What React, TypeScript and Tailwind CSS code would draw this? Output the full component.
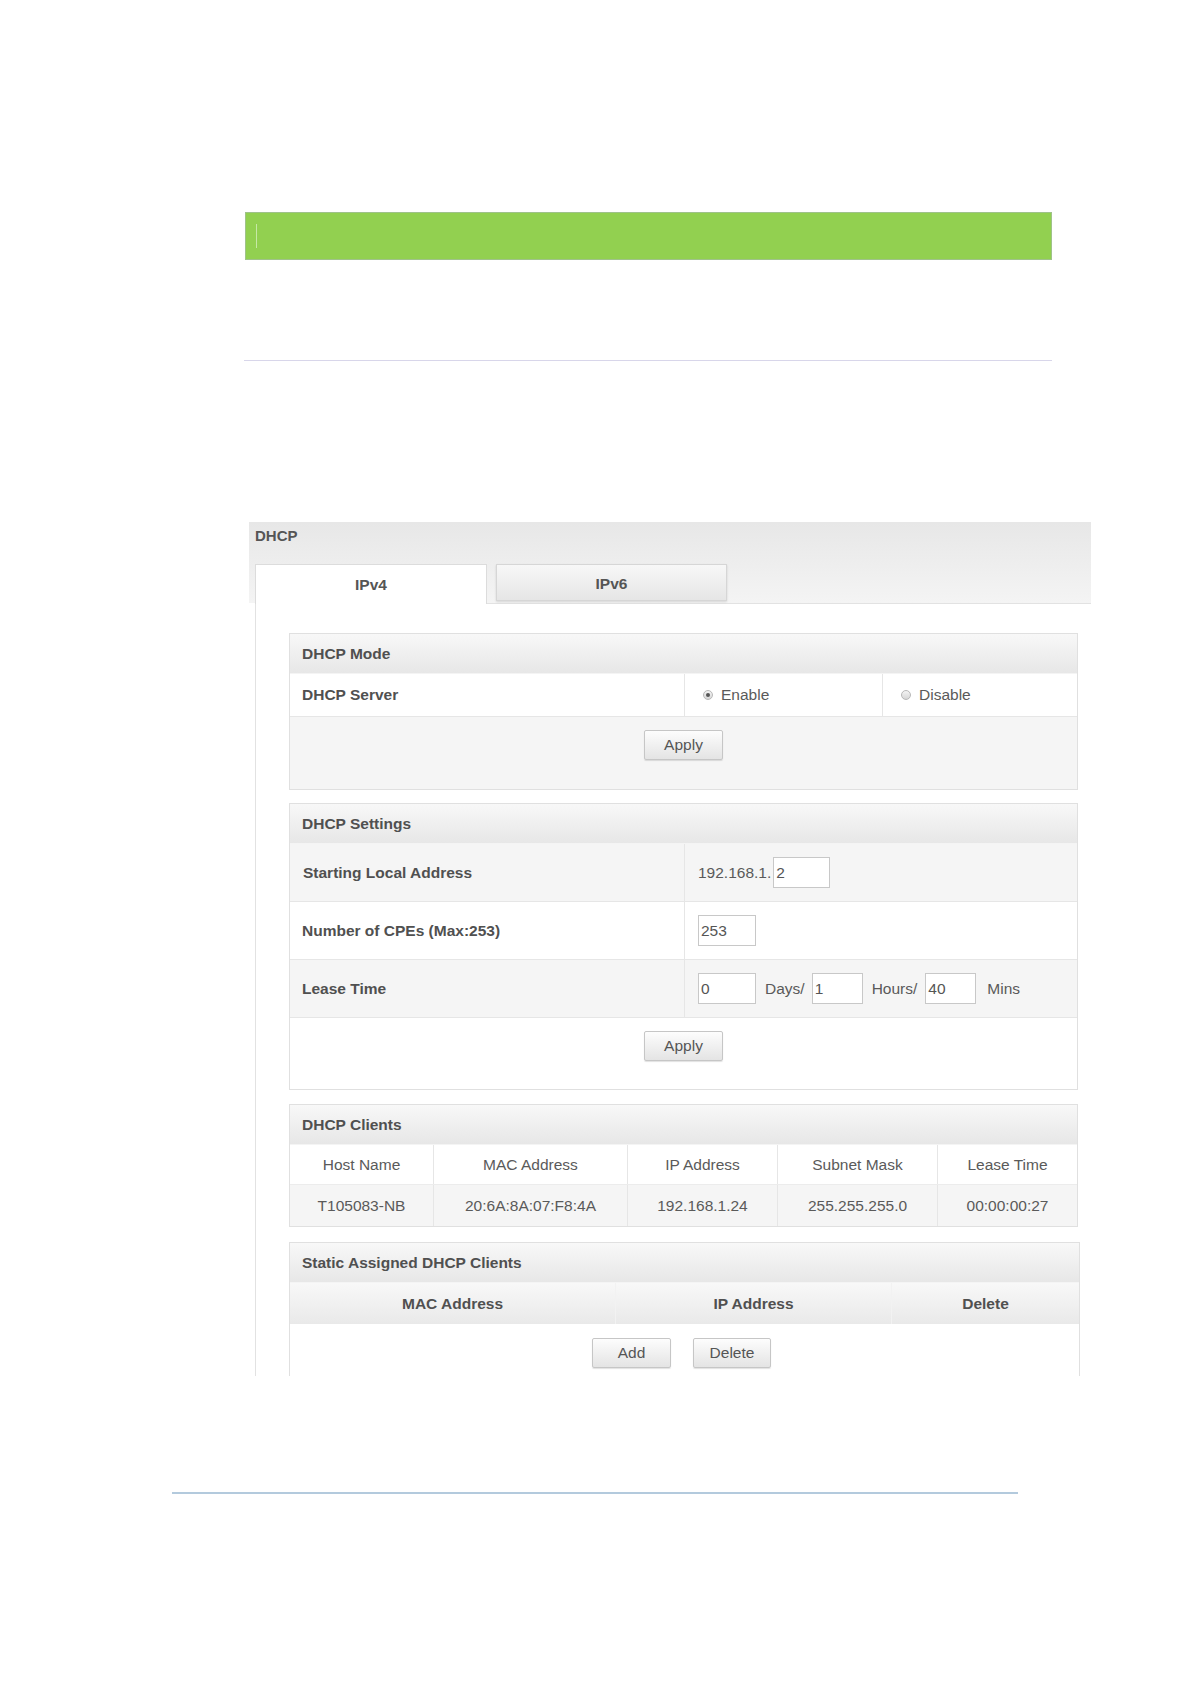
import React from "react";

function Btn({ label, w = 79 }: { label: string; w?: number }) {
  return (
    <div
      className="h-[30px] flex items-center justify-center border border-[#c6c6c6] rounded-[2px] bg-gradient-to-b from-[#fdfdfd] to-[#e4e4e4] text-[#555] shadow-[0_1px_1px_rgba(0,0,0,0.12)]"
      style={{ width: w }}
    >
      {label}
    </div>
  );
}

function Radio({ checked }: { checked?: boolean }) {
  return (
    <span className="w-[10px] h-[10px] rounded-full border border-[#b8b8b8] bg-gradient-to-b from-[#f4f4f4] to-[#d6d6d6] flex items-center justify-center">
      {checked && <span className="w-[4px] h-[4px] rounded-full bg-[#555]" />}
    </span>
  );
}

function Field({ value, w }: { value: string; w: number }) {
  return (
    <input
      readOnly
      defaultValue={value}
      className="h-[31px] border border-[#c8c8c8] bg-white px-[2px] text-[#555] outline-none"
      style={{ width: w }}
    />
  );
}

function SectionHeader({ title }: { title: string }) {
  return (
    <div className="h-[40px] flex items-center pl-[12px] bg-gradient-to-b from-[#f8f8f8] to-[#e7e7e7] border-b border-[#f4f4f4] font-bold text-[#505050]">
      {title}
    </div>
  );
}

export default function App() {
  return (
    <div className="w-[1190px] h-[1684px] bg-white overflow-hidden font-['Liberation_Sans',Arial,sans-serif] text-[15.5px] text-[#5a5a5a]">
      {/* green bar */}
      <div className="pt-[212px] pl-[245px]">
        <div className="w-[807px] h-[48px] bg-[#92d050] border border-[#9fc28a] flex items-start">
          <div className="ml-[10px] mt-[11px] w-px h-[24px] bg-[#c6e8a6]" />
        </div>
      </div>
      <div className="ml-[244px] mt-[100px] w-[808px] h-px bg-[#d8d6ea]" />

      {/* DHCP panel */}
      <div className="ml-[249px] mt-[161px] w-[842px]">
        <div className="bg-gradient-to-b from-[#e7e7e7] to-[#f4f4f4]">
          <div className="h-[28px] leading-[28px] pl-[6px] font-bold text-[15px] text-[#555]">DHCP</div>
          <div className="mt-[14px] pl-[6px] flex items-end">
            <div className="relative z-10 -mb-px w-[232px] h-[40px] bg-white border-t border-l border-r border-[#dcdcdc] flex items-center justify-center font-bold text-[#555]">
              IPv4
            </div>
            <div className="ml-[9px] mb-[2px] w-[231px] h-[37px] pt-[2px] bg-gradient-to-b from-[#f7f7f7] to-[#e6e6e6] border border-[#d6d6d6] shadow-[0_1px_2px_rgba(0,0,0,0.12)] flex items-center justify-center font-bold text-[#555]">
              IPv6
            </div>
          </div>
        </div>

        <div className="ml-[6px] h-[773px] overflow-hidden border-l border-t border-[#e2e2e2] bg-white pt-[29px] pl-[33px]">
          {/* DHCP Mode */}
          <div className="w-[789px] border border-[#e0e0e0]">
            <SectionHeader title="DHCP Mode" />
            <div className="grid grid-cols-[395px_198px_1fr] h-[43px] bg-white border-b border-[#e6e6e6]">
              <div className="flex items-center pl-[12px] font-bold text-[#505050] border-r border-[#e6e6e6]">DHCP Server</div>
              <div className="flex items-center pl-[18px] gap-[8px] border-r border-[#e6e6e6]">
                <Radio checked />
                <span>Enable</span>
              </div>
              <div className="flex items-center pl-[18px] gap-[8px]">
                <Radio />
                <span>Disable</span>
              </div>
            </div>
            <div className="h-[72px] bg-[#f5f5f5] flex justify-center pt-[13px]">
              <Btn label="Apply" />
            </div>
          </div>

          {/* DHCP Settings */}
          <div className="mt-[13px] w-[789px] border border-[#e0e0e0]">
            <SectionHeader title="DHCP Settings" />
            <div className="grid grid-cols-[395px_1fr] h-[58px] bg-[#f5f5f5] border-b border-[#e6e6e6]">
              <div className="flex items-center pl-[13px] font-bold text-[#505050] border-r border-[#e6e6e6]">Starting Local Address</div>
              <div className="flex items-center pl-[13px]">
                <span>192.168.1.</span>
                <span className="ml-[2px]"><Field value="2" w={57} /></span>
              </div>
            </div>
            <div className="grid grid-cols-[395px_1fr] h-[58px] bg-white border-b border-[#e6e6e6]">
              <div className="flex items-center pl-[12px] font-bold text-[#505050] border-r border-[#e6e6e6]">Number of CPEs (Max:253)</div>
              <div className="flex items-center pl-[13px]">
                <Field value="253" w={58} />
              </div>
            </div>
            <div className="grid grid-cols-[395px_1fr] h-[58px] bg-[#f5f5f5] border-b border-[#e6e6e6]">
              <div className="flex items-center pl-[12px] font-bold text-[#505050] border-r border-[#e6e6e6]">Lease Time</div>
              <div className="flex items-center pl-[13px]">
                <Field value="0" w={58} />
                <span className="ml-[9px] mr-[7px]">Days/</span>
                <Field value="1" w={51} />
                <span className="ml-[9px] mr-[8px]">Hours/</span>
                <Field value="40" w={51} />
                <span className="ml-[11px]">Mins</span>
              </div>
            </div>
            <div className="h-[71px] bg-white flex justify-center pt-[13px]">
              <Btn label="Apply" />
            </div>
          </div>

          {/* DHCP Clients */}
          <div className="mt-[14px] w-[789px] border border-[#e0e0e0]">
            <SectionHeader title="DHCP Clients" />
            <div className="grid grid-cols-[144px_194px_150px_160px_1fr] h-[40px] bg-white border-b border-[#ececec]">
              {["Host Name", "MAC Address", "IP Address", "Subnet Mask", "Lease Time"].map((t, i) => (
                <div key={t} className={"flex items-center justify-center " + (i < 4 ? "border-r border-[#e6e6e6]" : "")}>
                  {t}
                </div>
              ))}
            </div>
            <div className="grid grid-cols-[144px_194px_150px_160px_1fr] h-[41px] bg-[#f5f5f5]">
              {["T105083-NB", "20:6A:8A:07:F8:4A", "192.168.1.24", "255.255.255.0", "00:00:00:27"].map((t, i) => (
                <div key={t} className={"flex items-center justify-center " + (i < 4 ? "border-r border-[#e6e6e6]" : "")}>
                  {t}
                </div>
              ))}
            </div>
          </div>

          {/* Static Assigned */}
          <div className="mt-[15px] w-[791px] border-l border-r border-t border-[#e0e0e0]">
            <SectionHeader title="Static Assigned DHCP Clients" />
            <div className="grid grid-cols-[326px_276px_1fr] h-[41px] bg-gradient-to-b from-[#f8f8f8] to-[#e9e9e9] font-bold text-[#505050]">
              <div className="flex items-center justify-center border-r border-[#f2f2f2]">MAC Address</div>
              <div className="flex items-center justify-center border-r border-[#f2f2f2]">IP Address</div>
              <div className="flex items-center justify-center">Delete</div>
            </div>
            <div className="h-[80px] bg-white flex justify-center pt-[14px] gap-[22px] pr-[6px]">
              <Btn label="Add" />
              <Btn label="Delete" w={78} />
            </div>
          </div>
        </div>
      </div>

      {/* bottom blue line */}
      <div className="ml-[172px] mt-[116px] w-[846px] h-[2px] bg-[#b3cadd]" />
    </div>
  );
}
